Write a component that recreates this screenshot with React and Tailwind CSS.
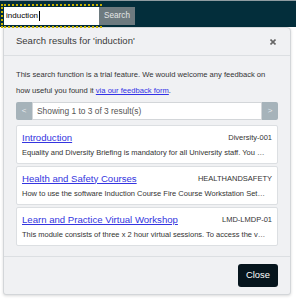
import React from "react";

const results = [
  {
    title: "Introduction",
    code: "Diversity-001",
    desc: "Equality and Diversity Briefing is mandatory for all University staff. You …",
  },
  {
    title: "Health and Safety Courses",
    code: "HEALTHANDSAFETY",
    desc: "How to use the software Induction Course Fire Course Workstation Set…",
  },
  {
    title: "Learn and Practice Virtual Workshop",
    code: "LMD-LMDP-01",
    desc: "This module consists of three x 2 hour virtual sessions. To access the v…",
  },
];

export default function App() {
  return (
    <div className="w-[296px] h-[300px] bg-white overflow-hidden font-['Liberation_Sans',Arial,sans-serif] text-[#333]">
      <div className="h-[27px] bg-[#032e3b] border-t border-[#8f9ca1] flex items-start pt-[6px] pl-[4px]">
        <div className="w-[95px] h-[18px] bg-white outline-2 outline-dotted outline-[#c9b200] outline-offset-[1px] flex items-center pl-[2px]">
          <span className="text-[8px] leading-none text-black">induction</span>
          <span className="w-px h-[10px] bg-black ml-px"></span>
        </div>
        <button className="w-[36px] h-[18px] bg-[#6d7a7f] text-[#e4e6e7] text-[8.2px] leading-none flex items-center justify-center">
          Search
        </button>
      </div>
      <div className="ml-[3px] w-[288px] h-[268px] bg-[#f0f1f3] border border-[#d3d6d9] rounded-tr-[4px] rounded-b-[3px] shadow-[0_1px_3px_rgba(0,0,0,0.15)] flex flex-col">
        <div className="h-[28px] flex items-center justify-between pl-[12px] pr-[14px] border-b border-[#dcdfe2]">
          <span className="text-[9.5px] text-[#3a3a3a]">Search results for 'induction'</span>
          <svg width="6" height="6" viewBox="0 0 6 6" className="text-[#666]">
            <path d="M0.5 0.5L5.5 5.5M5.5 0.5L0.5 5.5" stroke="currentColor" strokeWidth="1.6" />
          </svg>
        </div>
        <div className="flex-1 px-[12px] pt-[11px]">
          <p className="text-[7.6px] leading-[16px] text-[#333]">
            This search function is a trial feature. We would welcome any feedback on how useful you found it{" "}
            <a className="text-[#3232e6] underline">via our feedback form</a>.
          </p>
          <div className="mt-[3px] h-[18px] flex">
            <div className="w-[16px] bg-[#a6b3ba] rounded-l-[2px] flex items-center justify-center text-[8px] text-[#e8ecee]">
              &lt;
            </div>
            <div className="flex-1 bg-white border border-[#d3d6d9] flex items-center pl-[4px] text-[8.4px] text-[#555]">
              Showing 1 to 3 of 3 result(s)
            </div>
            <div className="w-[16px] bg-[#a6b3ba] rounded-r-[2px] flex items-center justify-center text-[8px] text-[#e8ecee]">
              &gt;
            </div>
          </div>
          <div className="mt-[5px] flex flex-col gap-[2px]">
            {results.map((r) => (
              <div key={r.code} className="bg-white border border-[#dcdfe2] rounded-[2px] px-[5px] pt-[5px] pb-[5px]">
                <div className="flex justify-between items-center h-[13px]">
                  <a className="text-[9.6px] text-[#3434e0] underline leading-none">{r.title}</a>
                  <span className="text-[7.5px] text-[#333] leading-none">{r.code}</span>
                </div>
                <div className="mt-[3px] h-[11px] text-[7.5px] leading-[11px] text-[#333] whitespace-nowrap">
                  {r.desc}
                </div>
              </div>
            ))}
          </div>
        </div>
        <div className="h-[38px] border-t border-[#dcdfe2] flex items-center justify-end pr-[12px]">
          <button className="w-[40px] h-[23px] bg-[#06151d] text-white text-[9.4px] rounded-[3px]">Close</button>
        </div>
      </div>
    </div>
  );
}
